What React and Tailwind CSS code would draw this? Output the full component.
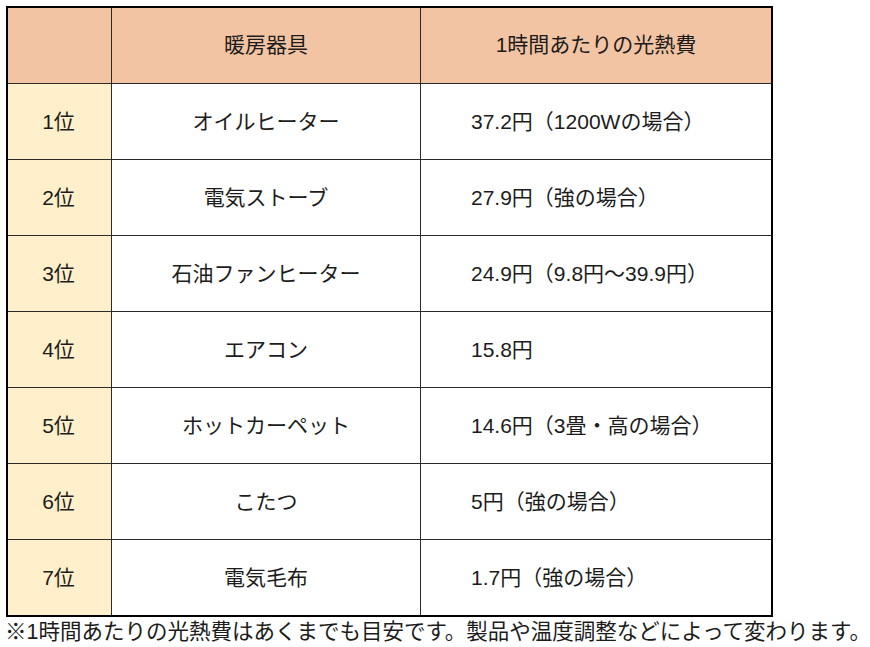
import React from 'react';

const rows = [
    { rank: '1位', name: 'オイルヒーター', cost: '37.2円（1200Wの場合）' },
    { rank: '2位', name: '電気ストーブ', cost: '27.9円（強の場合）' },
    { rank: '3位', name: '石油ファンヒーター', cost: '24.9円（9.8円〜39.9円）' },
    { rank: '4位', name: 'エアコン', cost: '15.8円' },
    { rank: '5位', name: 'ホットカーペット', cost: '14.6円（3畳・高の場合）' },
    { rank: '6位', name: 'こたつ', cost: '5円（強の場合）' },
    { rank: '7位', name: '電気毛布', cost: '1.7円（強の場合）' },
];

const App = () => {
    return (
        <div
            className="min-h-screen bg-white text-[#1c1c1c]"
            style={{ fontFamily: '"Liberation Sans", "Noto Sans CJK JP", sans-serif' }}
        >
            <div className="pt-[6px] pl-[6px]">
                <div className="w-[767px] border-2 border-black bg-black">
                    <div className="grid grid-cols-[103px_308px_350px] grid-rows-[75px_repeat(7,75px)] gap-px bg-[#2a2a2a] text-[21px]">
                        {/* Header */}
                        <div className="bg-[#f3c4a3]" />
                        <div className="bg-[#f3c4a3] flex items-center justify-center pb-[2px]">
                            暖房器具
                        </div>
                        <div className="bg-[#f3c4a3] flex items-center justify-center pb-[2px]">
                            1時間あたりの光熱費
                        </div>

                        {rows.map((row) => (
                            <React.Fragment key={row.rank}>
                                <div className="bg-[#fff0cb] flex items-center justify-center pr-[2px]">
                                    {row.rank}
                                </div>
                                <div className="bg-white flex items-center justify-center">
                                    {row.name}
                                </div>
                                <div className="bg-white flex items-center pl-[50px]">
                                    {row.cost}
                                </div>
                            </React.Fragment>
                        ))}
                    </div>
                </div>
            </div>
            <p className="text-[21.5px] leading-[30px] whitespace-nowrap pl-[5px]">
                ※1時間あたりの光熱費はあくまでも目安です。製品や温度調整などによって変わります。
            </p>
        </div>
    );
};

export default App;
